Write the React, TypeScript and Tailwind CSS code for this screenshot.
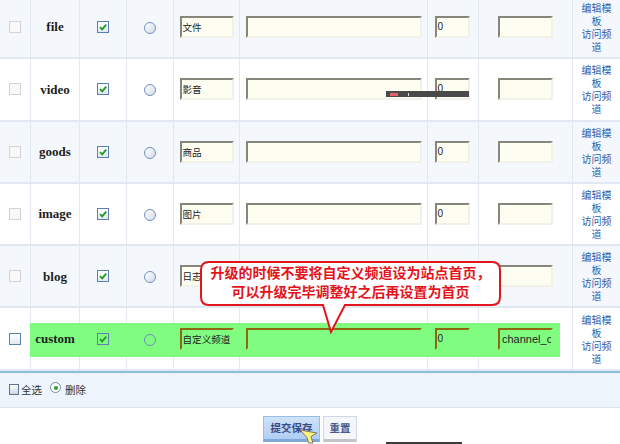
import React from 'react';

type Channel = {
  key: string;
  title: string;
  path?: string;
};

const CHANNELS: Channel[] = [
  { key: 'file', title: '文件' },
  { key: 'video', title: '影音' },
  { key: 'goods', title: '商品' },
  { key: 'image', title: '图片' },
  { key: 'blog', title: '日志' },
  { key: 'custom', title: '自定义频道', path: 'channel_custom' },
];

const cellBase =
  'h-[62.3px] border-b-2 border-r border-[#e1e8f1] flex items-center justify-center';

const CheckBox = ({ checked, muted, hl }: { checked?: boolean; muted?: boolean; hl?: boolean }) => (
  <span
    className={`relative z-10 inline-flex w-[12px] h-[12px] items-center justify-center border ${
      muted
        ? 'border-[#d3d3d3] bg-[#f9f9f9]'
        : hl
        ? 'border-[#5e7fac] bg-transparent'
        : 'border-[#5a7fb0] bg-gradient-to-b from-white to-[#e3e9f1]'
    }`}
  >
    {checked && (
      <svg width="10" height="10" viewBox="0 0 10 10">
        <path d="M2 5.2 L4.2 7.4 L8.2 2.6" fill="none" stroke="#1f9b24" strokeWidth="1.8" />
      </svg>
    )}
  </span>
);

const Radio = ({ hl }: { hl?: boolean }) => (
  <span
    className={`relative z-10 mt-[2px] inline-block w-[12px] h-[12px] rounded-full border border-[#6f90bf] ${
      hl ? 'bg-transparent' : 'bg-gradient-to-br from-white to-[#d3dce8]'
    }`}
  />
);

const Field = ({ value, hl, className }: { value?: string; hl?: boolean; className: string }) => (
  <div
    className={`relative z-10 h-[22px] overflow-hidden whitespace-nowrap border-2 pl-[1px] leading-[18px] text-[#222] ${
      hl
        ? 'border-t-[#8d6812] border-l-[#8d6812] border-r-transparent border-b-transparent'
        : 'border-t-[#86867a] border-l-[#86867a] border-r-[#f1f1e8] border-b-[#f1f1e8] bg-[#fdfdf2]'
    } ${className}`}
  >
    {value}
  </div>
);

const ChannelRow = ({ ch, index }: { ch: Channel; index: number }) => {
  const hl = ch.key === 'custom';
  const rowBg = index % 2 === 0 ? 'bg-[#f4f8fd]' : 'bg-white';
  return (
    <>
      <div className={`${cellBase} ${rowBg}`}>
        <CheckBox muted={!hl} />
      </div>
      <div className={`${cellBase} ${rowBg}`}>
        <span className="relative z-10 font-['Liberation_Serif',serif] text-[13px] font-bold text-[#1e1e1e]">
          {ch.key}
        </span>
      </div>
      <div className={`${cellBase} ${rowBg}`}>
        <CheckBox checked hl={hl} />
      </div>
      <div className={`${cellBase} ${rowBg}`}>
        <Radio hl={hl} />
      </div>
      <div className={`${cellBase} ${rowBg}`}>
        <Field hl={hl} value={ch.title} className="w-[54px] text-[9.6px]" />
      </div>
      <div className={`${cellBase} ${rowBg}`}>
        <Field hl={hl} className="w-[176px]" />
      </div>
      <div className={`${cellBase} ${rowBg} pr-[2px]`}>
        <Field hl={hl} value="0" className="w-[35px] text-[10px] font-['Liberation_Sans',sans-serif]" />
      </div>
      <div className={`${cellBase} ${rowBg}`}>
        <Field
          hl={hl}
          value={ch.path}
          className="w-[55px] pl-[2px] text-[11px] font-['Liberation_Sans',sans-serif]"
        />
      </div>
      <div className={`${cellBase} ${rowBg} border-r-0 flex-col px-[4px] text-center text-[10px] leading-[13px] text-[#2c60ad]`}>
        <span className="block">编辑模板</span>
        <span className="block">访问频道</span>
      </div>
    </>
  );
};

export default function App() {
  return (
    <div className="relative w-[620px] h-[444px] overflow-hidden bg-white font-['Noto_Sans_CJK_SC',sans-serif]">
      {/* channel list */}
      <div className="mt-[-3px] grid grid-cols-[31px_49px_47px_47px_66px_188px_51px_94px_47px]">
        {CHANNELS.map((ch, i) => (
          <ChannelRow key={ch.key} ch={ch} index={i} />
        ))}
      </div>

      {/* select-all bar */}
      <div className="border-t-2 border-[#8fbcdb]">
        <div className="h-[35px] bg-[#eef4fc] border-b border-[#dce4ee] flex items-center pl-[9px] text-[10.5px] text-[#333]">
          <span className="inline-block w-[10px] h-[11px] border border-[#5d7494] bg-gradient-to-b from-white to-[#cdd6e2]" />
          <span className="ml-[2px]">全选</span>
          <span className="ml-[8px] mb-[4px] inline-flex w-[11px] h-[11px] items-center justify-center rounded-full border border-[#7b8ba3] bg-white">
            <span className="w-[4px] h-[4px] rounded-full bg-[#22a52a]" />
          </span>
          <span className="ml-[4px]">删除</span>
        </div>
      </div>

      {/* submit buttons */}
      <div className="flex justify-center gap-[3px] pt-[8px]">
        <button className="w-[57px] h-[26px] border border-[#98bde6] border-b-[3px] border-b-[#7ea8d7] bg-gradient-to-b from-[#cfe2f9] to-[#b0cef3] text-[10.5px] font-bold text-[#3a4c86]">
          提交保存
        </button>
        <button className="w-[34px] h-[26px] border border-[#d2d8df] border-b-[3px] border-b-[#c2c6cb] bg-[#f4f6f9] text-[10.5px] font-bold text-[#4a5a8a]">
          重置
        </button>
      </div>

      {/* highlight behind the custom channel row */}
      <div className="absolute left-[30px] top-[323px] w-[530px] h-[34px] bg-[#80fd80]" />

      {/* callout note */}
      <div className="absolute z-20 left-[200px] top-[261px] w-[302px] h-[73px]">
        <svg width="302" height="73" viewBox="0 0 302 73" className="absolute inset-0">
          <path
            d="M9 1 H292 Q300 1 300 9 V36 Q300 44 292 44 H145 L131 71 L123 44 H9 Q1 44 1 36 V9 Q1 1 9 1 Z"
            fill="#ffffff"
            stroke="#e3141c"
            strokeWidth="2"
          />
        </svg>
        <div className="relative w-[301px] pt-[2px] text-center text-[14px] font-bold leading-[19px] text-[#e3141c]">
          <div>升级的时候不要将自定义频道设为站点首页，</div>
          <div>可以升级完毕调整好之后再设置为首页</div>
        </div>
      </div>

      {/* stray tooltip strip over the video row */}
      <div className="absolute z-20 left-[386px] top-[91px] w-[83px] h-[6px] bg-[#4a4a4a] flex items-center pl-[4px] gap-[10px]">
        <span className="w-[8px] h-[3px] bg-[#e4606a]" />
        <span className="w-[1px] h-[3px] bg-[#ddd]" />
      </div>
      <div className="absolute z-20 left-[386px] top-[442px] w-[76px] h-[2px] bg-[#3a3a3a]" />

      {/* mouse pointer */}
      <svg width="20" height="16" viewBox="0 0 20 16" className="absolute z-20 left-[299px] top-[429px]">
        <path d="M1 1 L18 4 L12 7.5 L14 14 L9.5 14 L8 8.5 Z" fill="#fff27a" stroke="#777" strokeWidth="1" />
      </svg>
    </div>
  );
}
